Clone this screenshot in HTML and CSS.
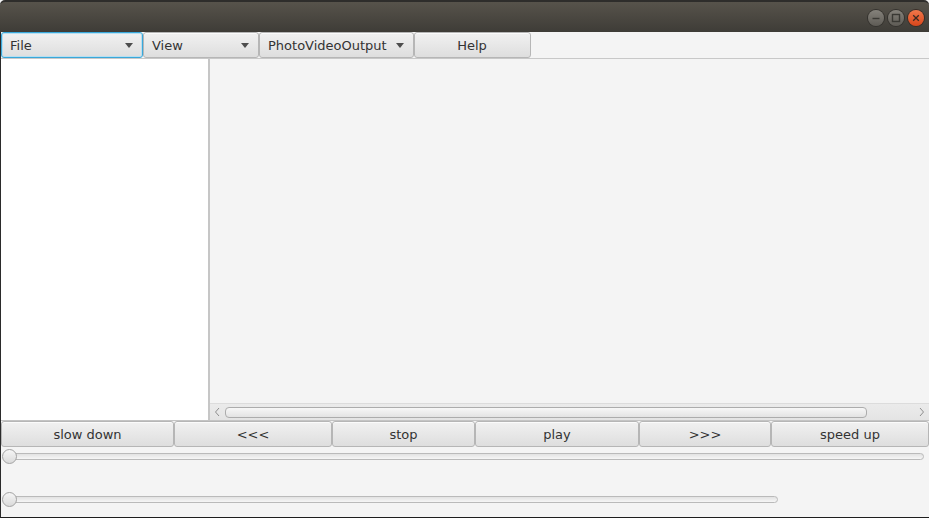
FILE: index.html
```html
<!DOCTYPE html>
<html>
<head>
<meta charset="utf-8">
<link rel="stylesheet" href="styles.css">
</head>
<body>
<div class="window">
  <div class="titlebar">
    <div class="wm-buttons">
      <span class="wm-btn wm-min"><svg width="16" height="16" viewBox="0 0 16 16"><line x1="4.5" y1="8.5" x2="11.5" y2="8.5" stroke="#3a3934" stroke-width="1.4"/></svg></span>
      <span class="wm-btn wm-max"><svg width="16" height="16" viewBox="0 0 16 16"><rect x="4.5" y="4.5" width="7" height="7" fill="none" stroke="#3a3934" stroke-width="1.4"/></svg></span>
      <span class="wm-btn wm-close"><svg width="16" height="16" viewBox="0 0 16 16"><path d="M5.2 5.2 L10.8 10.8 M10.8 5.2 L5.2 10.8" stroke="#3a2a22" stroke-width="1.3"/></svg></span>
    </div>
  </div>
  <div class="frame">
    <div class="menubar">
      <div class="menu focused w-file"><span>File</span><i class="arrow"></i></div>
      <div class="menu w-view"><span>View</span><i class="arrow"></i></div>
      <div class="menu w-pvo"><span>PhotoVideoOutput</span><i class="arrow"></i></div>
      <div class="menu plain w-help"><span>Help</span></div>
    </div>
    <div class="main">
      <div class="sidebar"></div>
      <div class="divider"></div>
      <div class="content">
        <div class="viewport"></div>
        <div class="hscroll">
          <svg class="sarrow" width="8" height="10" viewBox="0 0 8 10"><path d="M6 1 L2.5 5 L6 9" fill="none" stroke="#8e8e8e" stroke-width="1"/></svg>
          <div class="strack"><div class="sthumb"></div></div>
          <svg class="sarrow" width="8" height="10" viewBox="0 0 8 10"><path d="M2 1 L5.5 5 L2 9" fill="none" stroke="#8e8e8e" stroke-width="1"/></svg>
        </div>
      </div>
    </div>
    <div class="controls">
      <div class="btn b1">slow down</div>
      <div class="btn b2">&lt;&lt;&lt;</div>
      <div class="btn b3">stop</div>
      <div class="btn b4">play</div>
      <div class="btn b5">&gt;&gt;&gt;</div>
      <div class="btn b6">speed up</div>
    </div>
    <div class="sliders">
      <div class="slider"><div class="track long"></div><div class="thumb"></div></div>
      <div class="slider"><div class="track short"></div><div class="thumb"></div></div>
    </div>
  </div>
</div>
</body>
</html>
```
FILE: styles.css
```css
html, body {
  margin: 0;
  padding: 0;
  background: #f4f4f4;
}
body {
  width: 929px;
  height: 518px;
  overflow: hidden;
  font-family: "DejaVu Sans", "Liberation Sans", sans-serif;
  font-size: 13px;
  color: #333333;
}
.window {
  display: flex;
  flex-direction: column;
  height: 518px;
}
.titlebar {
  height: 32px;
  box-sizing: border-box;
  border-top: 2px solid #2e2d2b;
  border-radius: 5px 5px 0 0;
  background: linear-gradient(#57534b, #3e3c37);
  display: flex;
  justify-content: flex-end;
  align-items: center;
}
.wm-buttons {
  display: flex;
  gap: 4px;
  margin-right: 5px;
  margin-top: 1px;
}
.wm-btn {
  width: 16px;
  height: 16px;
  border-radius: 50%;
  box-sizing: border-box;
  display: flex;
}
.wm-min, .wm-max {
  background: linear-gradient(#85827b, #5e5b55);
  box-shadow: 0 0 0 1px #34322e;
}
.wm-close {
  background: linear-gradient(#f0774a, #d9461b);
  box-shadow: 0 0 0 1px #3a2c25;
}
.frame {
  flex: 1;
  display: flex;
  flex-direction: column;
  border-left: 1px solid #2b2b2b;
  border-bottom: 1px solid #1e1e1e;
  background: #f4f4f4;
}
.menubar {
  height: 26px;
  border-bottom: 1px solid #c8c8c8;
  display: flex;
}
.menu {
  box-sizing: border-box;
  height: 26px;
  border: 1px solid #b6b6b6;
  border-radius: 3px;
  background: linear-gradient(#f1f1f1, #dedede);
  box-shadow: inset 0 1px 0 #fbfbfb;
  display: flex;
  align-items: center;
  justify-content: space-between;
  padding: 0 9px 0 8px;
}
.menu.focused {
  border-color: #3aa8da;
  box-shadow: inset 0 0 0 1px #b7dff1;
}
.menu.plain {
  justify-content: center;
}
.w-file { width: 142px; }
.w-view { width: 116px; }
.w-pvo { width: 155px; }
.w-help { width: 117px; }
.arrow {
  width: 0;
  height: 0;
  border-left: 4.5px solid transparent;
  border-right: 4.5px solid transparent;
  border-top: 5px solid #4d4d4d;
}
.main {
  height: 361px;
  border-bottom: 1px solid #c4c4c4;
  display: flex;
}
.sidebar {
  width: 207px;
  background: #ffffff;
}
.divider {
  width: 2px;
  background: #c6c6c6;
}
.content {
  flex: 1;
  display: flex;
  flex-direction: column;
}
.viewport {
  flex: 1;
  background: #f4f4f4;
}
.hscroll {
  height: 16px;
  border-top: 1px solid #dcdcdc;
  background: linear-gradient(#ebebeb, #e4e4e4);
  display: flex;
  align-items: center;
  padding: 0 3px;
  gap: 4px;
}
.sarrow {
  flex: none;
}
.strack {
  flex: 1;
  display: flex;
  padding-right: 47px;
}
.sthumb {
  flex: 1;
  height: 11px;
  box-sizing: border-box;
  border: 1px solid #acacac;
  border-radius: 4px;
  background: linear-gradient(#f7f7f7, #e3e3e3);
}
.controls {
  display: flex;
  height: 26px;
}
.btn {
  box-sizing: border-box;
  height: 26px;
  border: 1px solid #b6b6b6;
  border-radius: 3px;
  background: linear-gradient(#f1f1f1, #dedede);
  box-shadow: inset 0 1px 0 #fbfbfb;
  display: flex;
  align-items: center;
  justify-content: center;
}
.b1 { width: 173px; }
.b2 { width: 158px; }
.b3 { width: 143px; }
.b4 { width: 164px; }
.b5 { width: 132px; }
.b6 { width: 158px; }
.sliders {
  display: flex;
  flex-direction: column;
  padding-top: 2px;
  gap: 28px;
}
.slider {
  position: relative;
  height: 15px;
}
.track {
  position: absolute;
  top: 4px;
  left: 7px;
  height: 7px;
  box-sizing: border-box;
  border: 1px solid #bababa;
  border-radius: 4px;
  background: linear-gradient(#e2e2e2, #f6f6f6);
}
.track.long { width: 916px; }
.track.short { width: 770px; }
.thumb {
  position: absolute;
  top: 0;
  left: 1px;
  width: 15px;
  height: 15px;
  box-sizing: border-box;
  border-radius: 50%;
  border: 1px solid #a3a3a3;
  background: linear-gradient(#f6f6f6, #dadada);
}
```
